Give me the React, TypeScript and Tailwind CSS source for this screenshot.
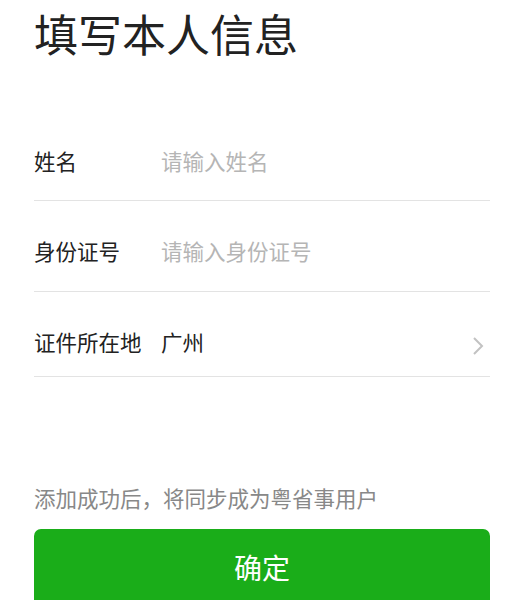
import React from "react";

function Row({ label, value, placeholder, chevron, h }: { label: string; value?: string; placeholder?: string; chevron?: boolean; h: string }) {
  return (
    <div className={`flex items-start border-b border-[#e3e3e3] pt-[39px] ${h}`}>
      <div className="w-[127px] shrink-0 text-[21.5px] leading-[22px] text-[#222]">{label}</div>
      {value ? (
        <div className="flex-1 text-[21.5px] leading-[22px] text-[#222]">{value}</div>
      ) : (
        <div className="flex-1 text-[21.5px] leading-[22px] text-[#b5b5b5]">{placeholder}</div>
      )}
      {chevron && (
        <svg width="14" height="20" viewBox="0 0 14 20" className="mr-[5px] mt-[5px]">
          <path d="M3 2 L11 10 L3 18" fill="none" stroke="#c2c2c2" strokeWidth="2" />
        </svg>
      )}
    </div>
  );
}

export default function App() {
  return (
    <div className="w-[517px] h-[600px] overflow-hidden bg-white" style={{ fontFamily: '"Noto Sans CJK SC", "Noto Sans", sans-serif' }}>
      <div className="pl-[34px] pt-[11px] text-[44px] leading-[44px] text-[#222]">填写本人信息</div>
      <div className="ml-[33px] mr-[27px] mt-[56px] pl-[1px]">
        <Row label="姓名" placeholder="请输入姓名" h="h-[90px]" />
        <Row label="身份证号" placeholder="请输入身份证号" h="h-[91px]" />
        <Row label="证件所在地" value="广州" chevron h="h-[85px]" />
      </div>
      <div className="pl-[34px] mt-[110px] text-[21.5px] leading-[22px] text-[#888]">添加成功后，将同步成为粤省事用户</div>
      <div className="ml-[34px] mr-[27px] mt-[20px] h-[80px] rounded-[7px] bg-[#1aad19] flex items-start justify-center pt-[24px]">
        <span className="text-[28px] leading-[28px] text-white">确定</span>
      </div>
    </div>
  );
}
